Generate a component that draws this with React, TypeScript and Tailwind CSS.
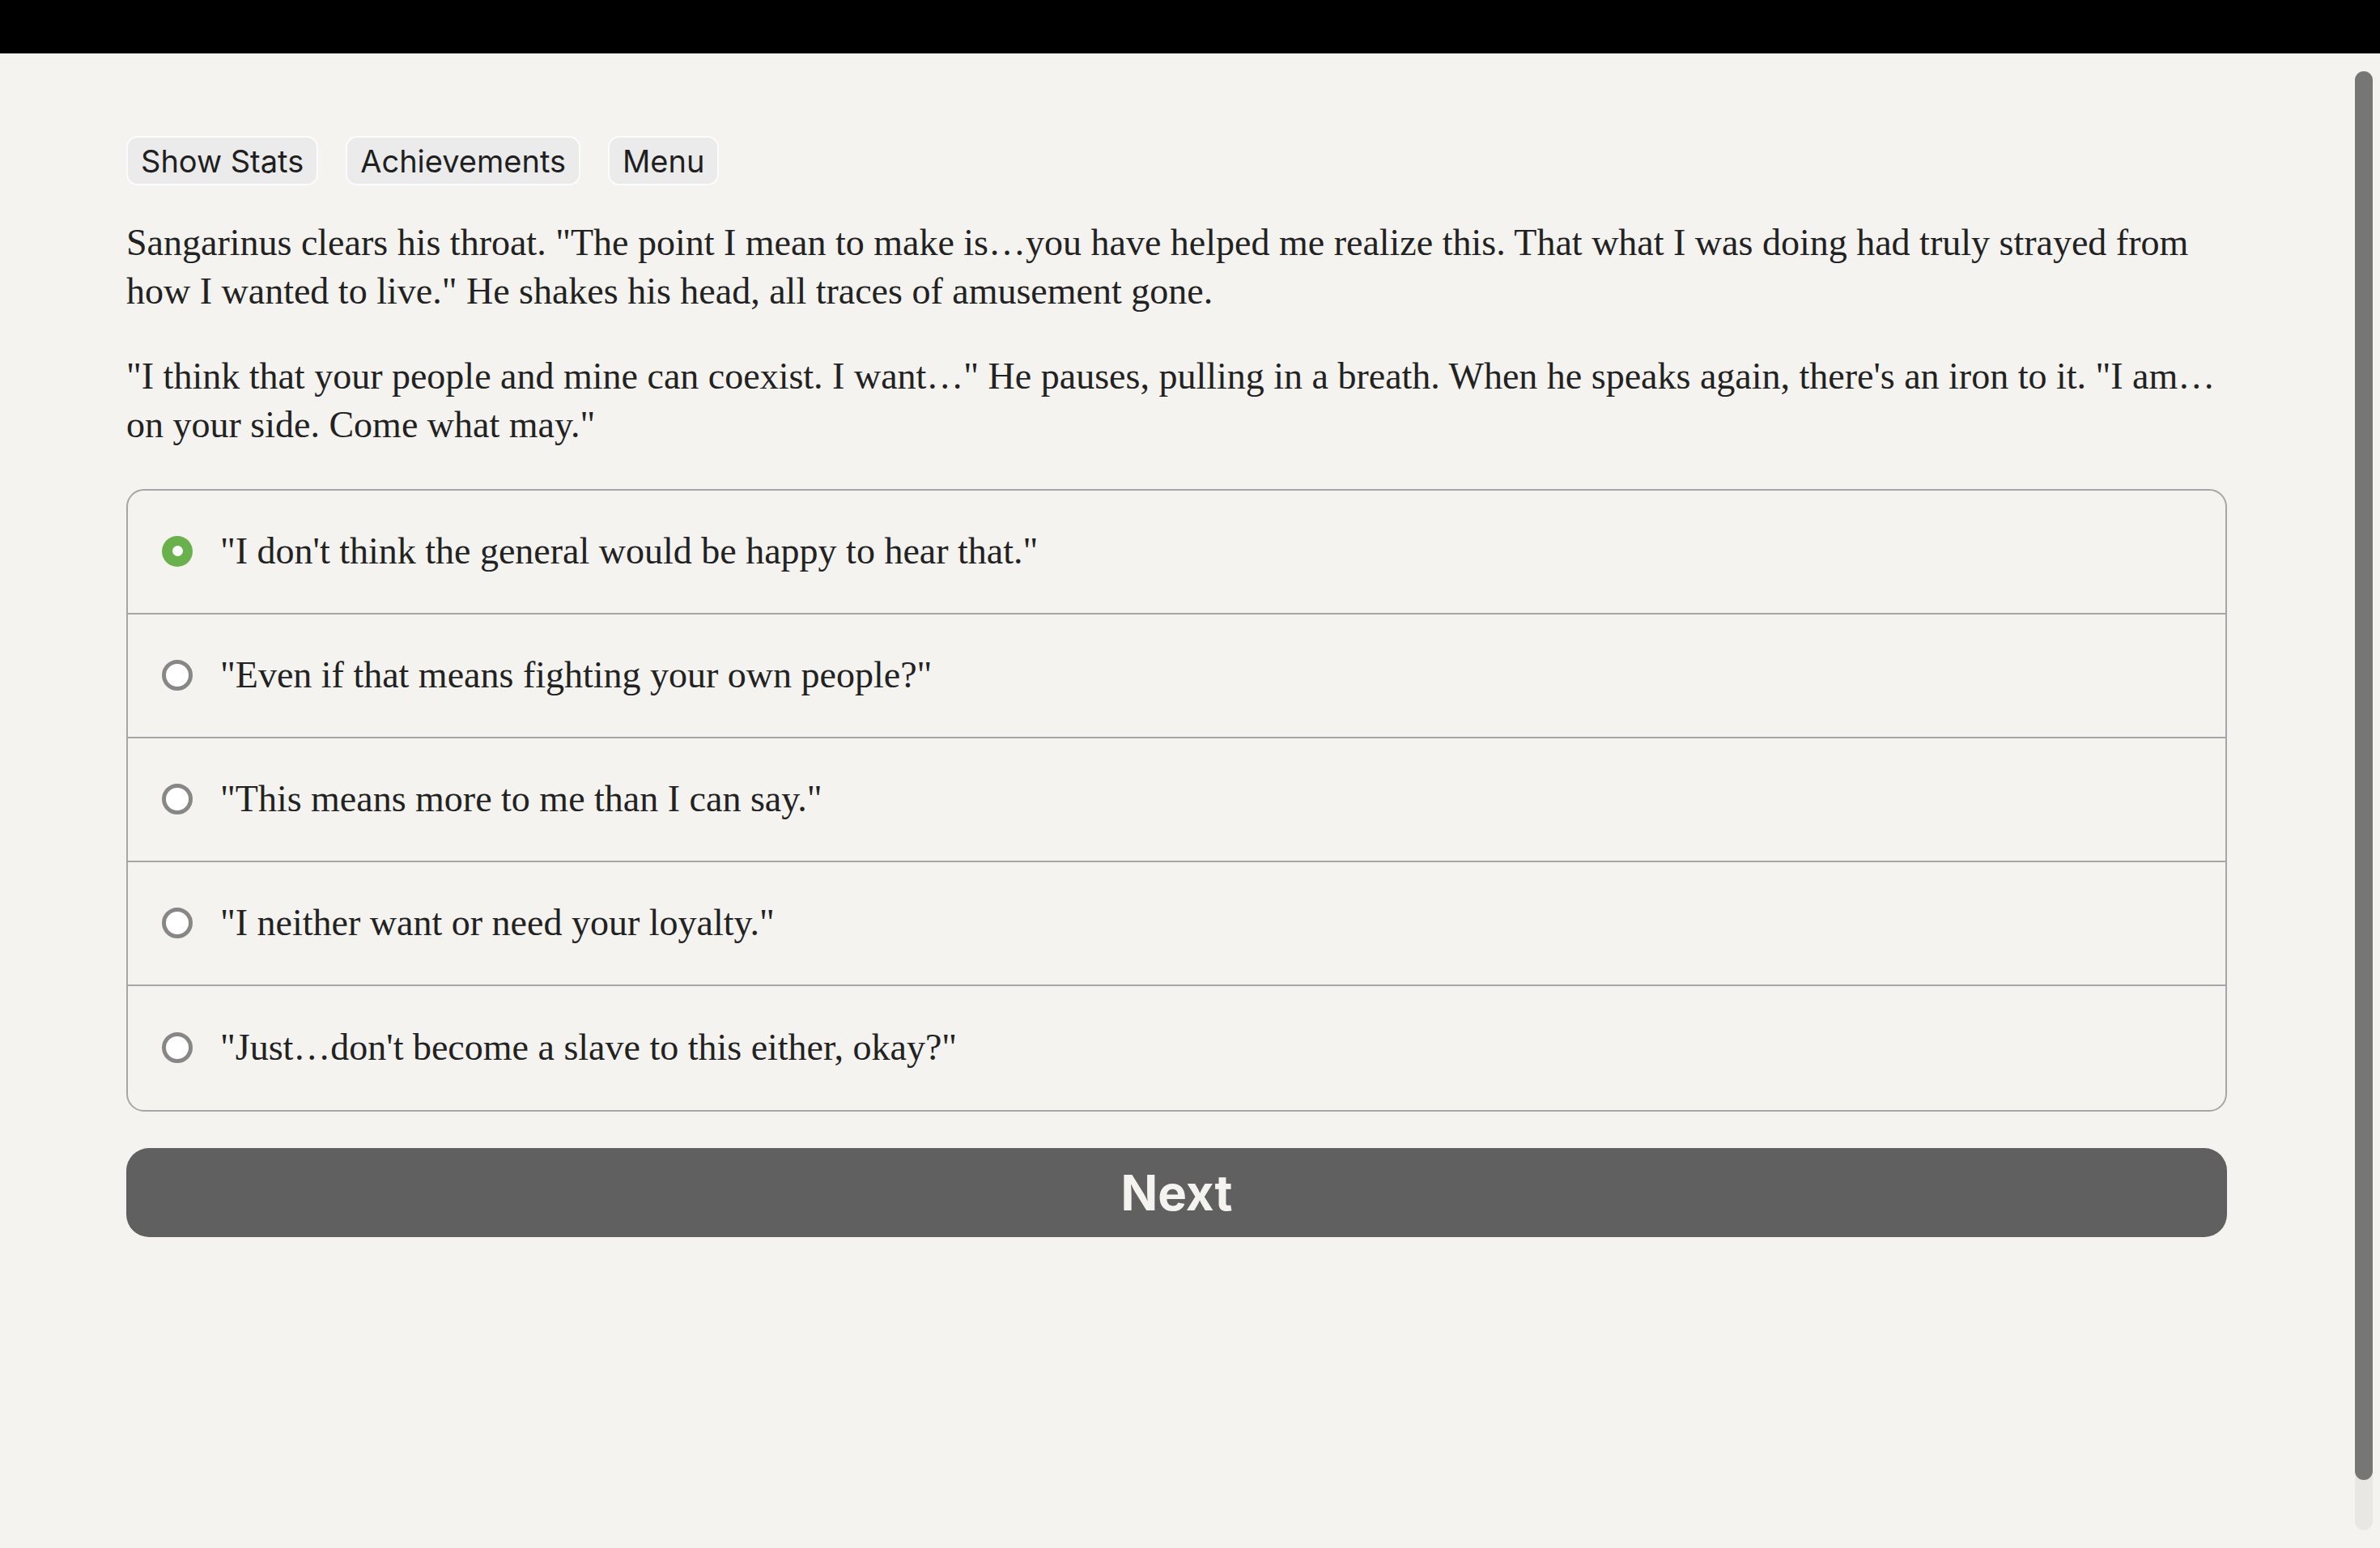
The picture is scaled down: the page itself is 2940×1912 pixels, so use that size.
import { useState } from 'react';

const choices = [
  '"I don\'t think the general would be happy to hear that."',
  '"Even if that means fighting your own people?"',
  '"This means more to me than I can say."',
  '"I neither want or need your loyalty."',
  '"Just…don\'t become a slave to this either, okay?"',
];

export default function App() {
  const [selected, setSelected] = useState(0);

  return (
    <div className="flex h-[1912px] w-[2940px] flex-col overflow-hidden bg-[#f4f3ef]">
      {/* top bar */}
      <div className="h-[66px] w-full shrink-0 bg-black" />

      <div className="flex flex-1">
        <main className="w-[2751px] shrink-0 pl-[156px] pt-[102px] font-['Liberation_Serif',serif] text-[46px] leading-[60px] text-[#222222]">
          {/* toolbar */}
          <div className="flex gap-[34px] font-['Inter',sans-serif] text-[38px] leading-none text-[#1f1f1f]">
            <button className="h-[61px] rounded-[14px] border-2 border-[#fcfcfc] bg-[#ebebeb] px-[16px]">Show Stats</button>
            <button className="h-[61px] rounded-[14px] border-2 border-[#fcfcfc] bg-[#ebebeb] px-[16px]">Achievements</button>
            <button className="h-[61px] rounded-[14px] border-2 border-[#fcfcfc] bg-[#ebebeb] px-[16px]">Menu</button>
          </div>

          {/* story text */}
          <p className="mt-[41px]">
            Sangarinus clears his throat. "The point I mean to make is…you have helped me realize this. That what I was doing had truly strayed from how I wanted to live." He shakes his head, all traces of amusement gone.
          </p>
          <p className="mt-[45px]">
            "I think that your people and mine can coexist. I want…" He pauses, pulling in a breath. When he speaks again, there's an iron to it. "I am… on your side. Come what may."
          </p>

          {/* choices */}
          <div className="mt-[49px] overflow-hidden rounded-[22px] border-2 border-[#a6a6a9]">
            {choices.map((c, i) => (
              <label
                key={i}
                onClick={() => setSelected(i)}
                className="flex h-[153px] cursor-pointer items-center gap-[34px] border-b-2 border-[#a6a6a9] pb-[2px] pl-[42px] last:border-b-0"
              >
                {selected === i ? (
                  <span className="flex h-[38px] w-[38px] shrink-0 items-center justify-center rounded-full bg-[#6ab04c]">
                    <span className="h-[13px] w-[13px] rounded-full bg-white" />
                  </span>
                ) : (
                  <span className="h-[38px] w-[38px] shrink-0 rounded-full border-[5px] border-[#878787] bg-white" />
                )}
                <span>{c}</span>
              </label>
            ))}
          </div>

          <button className="mt-[45px] h-[110px] w-full rounded-[28px] bg-[#616060] font-['Inter',sans-serif] text-[60px] font-bold text-[#f4f3ef]">
            Next
          </button>
        </main>

        {/* scrollbar */}
        <div className="ml-auto mr-[9px] mt-[22px] h-[1802px] w-[22px] rounded-full bg-[#e8e7e3]">
          <div className="h-[1740px] rounded-full bg-[#767674]" />
        </div>
      </div>
    </div>
  );
}
